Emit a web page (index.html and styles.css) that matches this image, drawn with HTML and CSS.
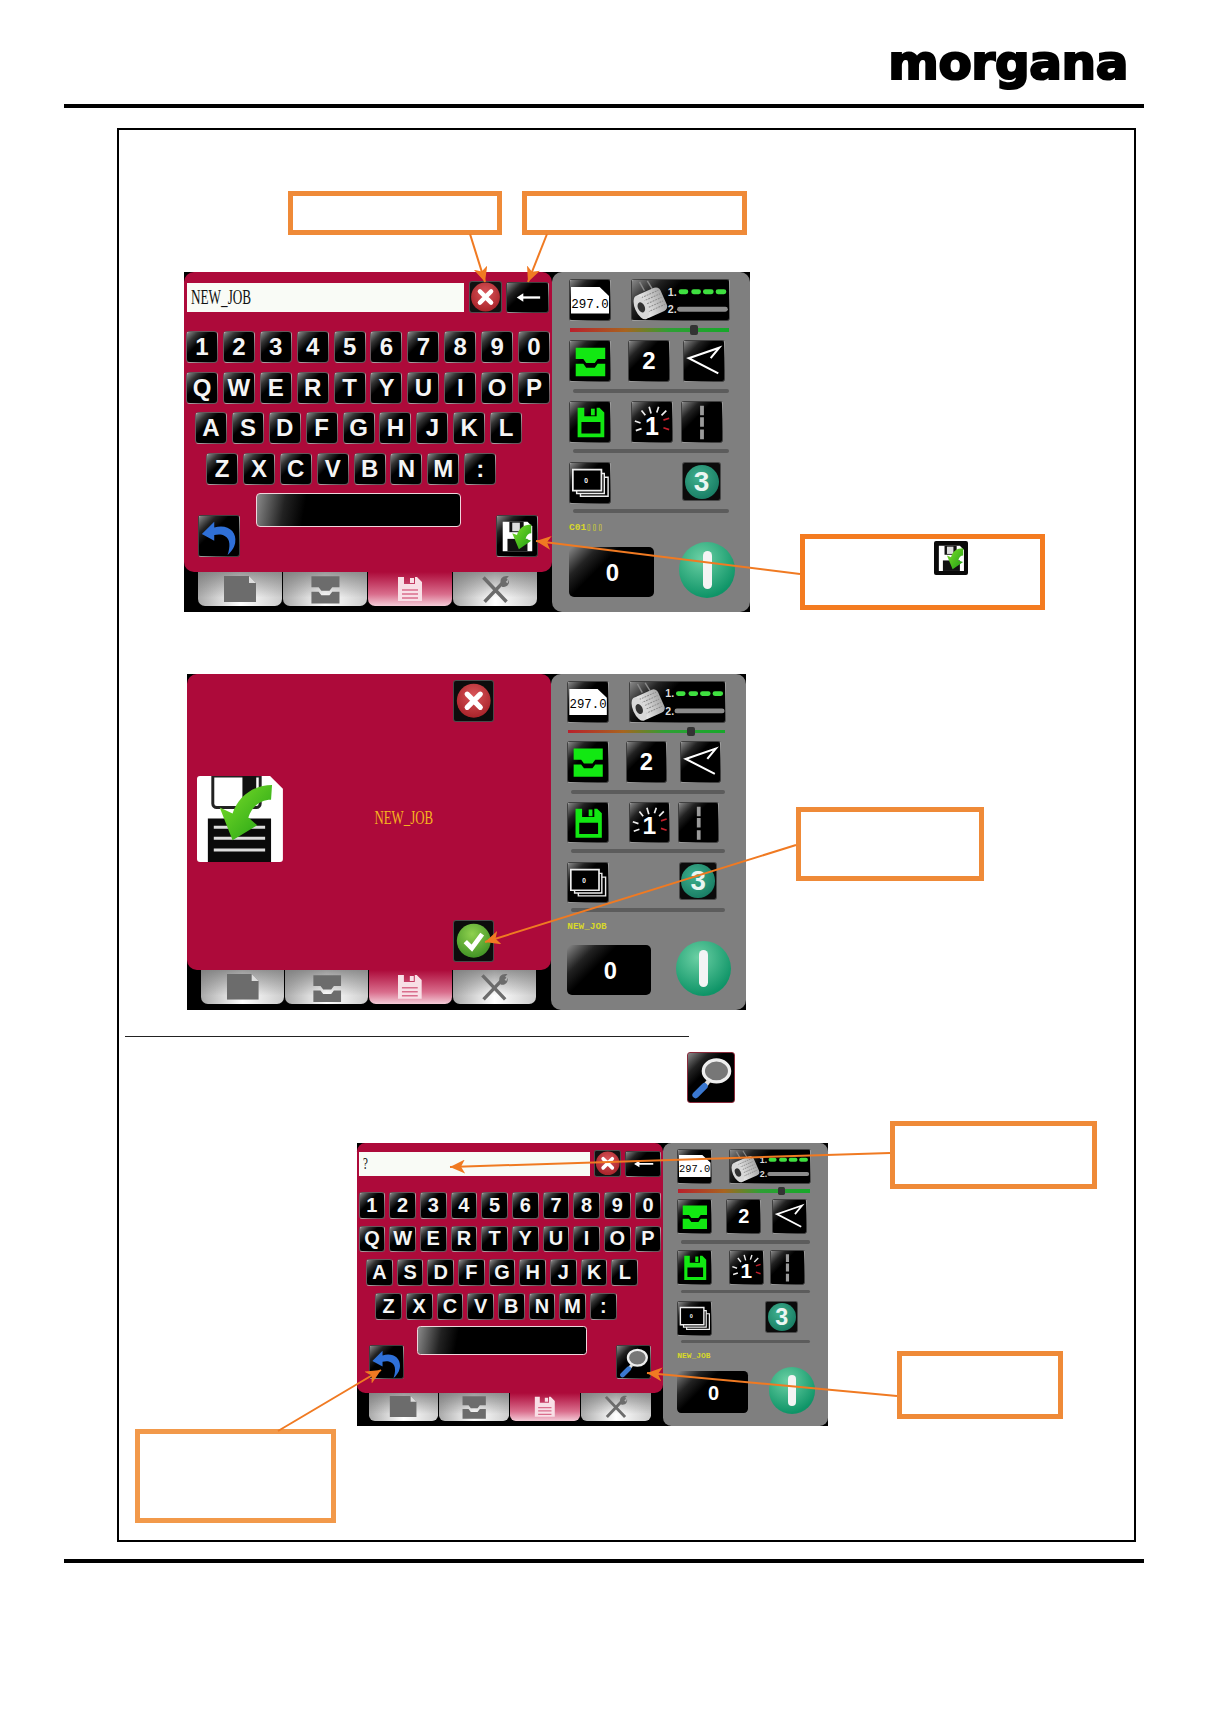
FILE: index.html
```html
<!DOCTYPE html>
<html lang="en">
<head>
  <meta charset="UTF-8" />
  <title>morgana - save job</title>
  <link rel="stylesheet" href="styles.css">
</head>
<body>
  <!-- icon sprite -->
  <svg class="sprite" xmlns="http://www.w3.org/2000/svg">
    <defs>
      <radialGradient id="redBall" cx="50%" cy="35%" r="70%"><stop offset="0" stop-color="#d9565a"/><stop offset="1" stop-color="#a51f26"/></radialGradient>
      <radialGradient id="greenBall" cx="45%" cy="30%" r="75%"><stop offset="0" stop-color="#8fd14f"/><stop offset="1" stop-color="#3d8f22"/></radialGradient>
      <linearGradient id="arrowGreen" x1="0" y1="0" x2="1" y2="1"><stop offset="0" stop-color="#7fe02a"/><stop offset="1" stop-color="#1f9f14"/></linearGradient>
      <linearGradient id="spool" x1="0" y1="0" x2="1" y2="0"><stop offset="0" stop-color="#f4f4f4"/><stop offset="1" stop-color="#a8a8a8"/></linearGradient>
      <marker id="head" markerUnits="userSpaceOnUse" markerWidth="16" markerHeight="14" refX="15" refY="7" orient="auto"><path d="M0 0L15 7L0 14L4 7z" fill="#f07a22"/></marker>
      <symbol id="i-close" viewBox="0 0 42 42"><circle cx="21" cy="21" r="18" fill="url(#redBall)"/><path d="M14 14l14 14M28 14L14 28" stroke="#fff" stroke-width="5.5" stroke-linecap="round"/></symbol>
      <symbol id="i-check" viewBox="0 0 42 42"><circle cx="21" cy="21" r="18" fill="url(#greenBall)"/><path d="M12 22l7 7 11-15" fill="none" stroke="#fff" stroke-width="5"/></symbol>
      <symbol id="i-back" viewBox="0 0 43 31"><path d="M14 15.500h21" stroke="#fff" stroke-width="2.500"/><path d="M10 15.500l7-4.500v9z" fill="#fff"/></symbol>
      <symbol id="i-undo" viewBox="0 0 42 42"><path d="M3 19L16 6v6c14-4 24 4 22 16-1 6-5 10-8 13 3-9 3-17-3-20-3-2-7-2-11-1v6z" fill="#2f70d8"/></symbol>
      <symbol id="i-savecheck" viewBox="0 0 42 42"><path d="M6 6h26l5 5v26H6z" fill="#fff"/><path d="M13 6h15v11H13z" fill="#111"/><path d="M16 7h8v9h-8z" fill="#ddd"/><path d="M11 24h21v13H11z" fill="#111"/><path d="M36 9c-8 0-13 4-15 11l-5-2 7 17 13-9-6-2c1-4 3-6 6-6z" fill="url(#arrowGreen)"/></symbol>
      <symbol id="i-bigsave" viewBox="0 0 87 87"><path d="M3 0h71l13 13v71a3 3 0 0 1-3 3H3a3 3 0 0 1-3-3V3a3 3 0 0 1 3-3z" fill="#fff"/><path d="M16 0v28a4 4 0 0 0 4 4h40a4 4 0 0 0 4-4V0z" fill="none" stroke="#222" stroke-width="3"/><path d="M46 0h14v24H46z" fill="#111"/><path d="M11 43h64v44H11z" fill="#0a0a0a"/><path d="M17 52h52M17 63h52M17 75h52" stroke="#ddd" stroke-width="3"/><path d="M76 9l-1 15c-10 0-19 6-23 18l9 8-25 15-13-33 13 6C42 20 58 9 76 9z" fill="url(#arrowGreen)"/></symbol>
      <symbol id="i-search" viewBox="0 0 42 42"><ellipse cx="26" cy="15" rx="12" ry="10" fill="#777" stroke="#eee" stroke-width="3"/><path d="M19 24l-3 4" stroke="#ddd" stroke-width="4"/><path d="M15 29L7 37" stroke="#3a78d0" stroke-width="6" stroke-linecap="round"/></symbol>
      <symbol id="i-tray" viewBox="0 0 42 42"><path d="M6 7h31v12h-8l-3 4h-9l-3-4H6z" fill="currentColor"/><path d="M6 24h8l3 4h9l3-4h8v13H6z" fill="currentColor"/></symbol>
      <symbol id="i-angle" viewBox="0 0 42 42"><path d="M36 34L5 18l32-11-9 11" fill="none" stroke="#fff" stroke-width="2.200"/></symbol>
      <symbol id="i-floppy" viewBox="0 0 42 42"><path fill-rule="evenodd" fill="currentColor" d="M8 6h23l5 5v26H8zM15 6v9h13V6zM12 21v12h20V21z"/><path d="M22 7h4v7h-4z" fill="currentColor"/></symbol>
      <symbol id="i-floppytab" viewBox="0 0 26 26"><path fill-rule="evenodd" fill="#f8dfe6" d="M1 1h19l5 5v19H1zM7 1v7h11V1z"/><path d="M13 2h4v5h-4z" fill="#f8dfe6"/><path d="M5 14h16M5 18h16M5 22h16" stroke="#d96d8c" stroke-width="1.500"/></symbol>
      <symbol id="i-rays" viewBox="0 0 42 42"><path d="M3 20l6 2M4 30l6-2M10 9l4 5M18 5l2 7M28 5l-2 6M36 9l-5 5" stroke="#eee" stroke-width="1.800"/><path d="M33 19l6-2M33 27l6 2" stroke="#c21f2b" stroke-width="1.800"/></symbol>
      <symbol id="i-dash" viewBox="0 0 42 42"><path d="M21 4v10M21 16v10M21 29v10" stroke="#9a9a9a" stroke-width="4"/></symbol>
      <symbol id="i-stack" viewBox="0 0 42 42"><path d="M11 15h29v20H11z" fill="#000" stroke="#eee" stroke-width="1.500"/><path d="M7 11h29v21H7z" fill="#000" stroke="#eee" stroke-width="1.500"/><path d="M3 7h30v22H3z" fill="#000" stroke="#eee" stroke-width="1.800"/><text x="17" y="21" class="stack-num">0</text></symbol>
      <symbol id="i-bobbin" viewBox="0 0 98 41"><path d="M7 2l5 9M15 1l5 8" stroke="#888" stroke-width="1.500"/><g transform="rotate(-24 18 24)"><rect x="6" y="11" width="27" height="26" rx="5" fill="url(#spool)"/><path d="M12 15h19M12 19h19M12 23h19M12 27h19M12 31h19" stroke="#888" stroke-dasharray="2 1"/><ellipse cx="8" cy="24" rx="6.500" ry="13" fill="#d8d8d8"/><ellipse cx="8" cy="24" rx="3.500" ry="5.500" fill="#333"/></g><text x="36" y="16" class="bob-num">1.</text><text x="36" y="34" class="bob-num">2.</text><path d="M49.500 12h5M62.500 12h5M74.500 12h6M87.500 12h6" stroke="#3fe040" stroke-width="5" stroke-linecap="round"/><path d="M48 30h47" stroke="#8c8c8c" stroke-width="5" stroke-linecap="round"/></symbol>
      <symbol id="i-doc" viewBox="0 0 34 26"><path d="M1 0h25l7 7v19H1z" fill="#6c6c6c"/><path d="M26 0l7 7h-7z" fill="#ddd"/></symbol>
      <symbol id="i-tools" viewBox="0 0 26 26"><path d="M3 3l20 21M23 4L4 24" stroke="#6c6c6c" stroke-width="3"/><path d="M18 8c-1-4 2-7 7-6l-4 4 3 2 1-3c1 4-2 7-6 6z" fill="#6c6c6c"/></symbol>
    </defs>
  </svg>

  <div class="page">
    <header class="top">
      <div class="logo">morgana</div>
    </header>

    <main class="frame">
      <!-- first screen: keyboard, save -->
      <div class="screen screen-one">
        <div class="left">
          <div class="panel">
            <div class="entry">
              <div class="field"><span class="field-text">NEW_JOB</span></div>
              <div class="btn btn-close"><svg><use href="#i-close"/></svg></div>
              <div class="btn btn-back"><svg><use href="#i-back"/></svg></div>
            </div>
            <div class="keyboard">
              <div class="keys"><b>1</b><b>2</b><b>3</b><b>4</b><b>5</b><b>6</b><b>7</b><b>8</b><b>9</b><b>0</b></div>
              <div class="keys"><b>Q</b><b>W</b><b>E</b><b>R</b><b>T</b><b>Y</b><b>U</b><b>I</b><b>O</b><b>P</b></div>
              <div class="keys keys-a"><b>A</b><b>S</b><b>D</b><b>F</b><b>G</b><b>H</b><b>J</b><b>K</b><b>L</b></div>
              <div class="keys keys-z"><b>Z</b><b>X</b><b>C</b><b>V</b><b>B</b><b>N</b><b>M</b><b>:</b></div>
            </div>
            <div class="actions">
              <div class="btn btn-action"><svg><use href="#i-undo"/></svg></div>
              <div class="spacebar"></div>
              <div class="btn btn-action"><svg><use href="#i-savecheck"/></svg></div>
            </div>
          </div>
          <div class="tabs">
            <div class="tab"><svg class="tab-doc"><use href="#i-doc"/></svg></div>
            <div class="tab"><svg class="tab-tray"><use href="#i-tray"/></svg></div>
            <div class="tab tab-active"><svg class="tab-save"><use href="#i-floppytab"/></svg></div>
            <div class="tab"><svg class="tab-tools"><use href="#i-tools"/></svg></div>
          </div>
        </div>
        <aside class="side">
          <div class="row gap-20">
            <div class="btn"><div class="file"><span>297.0</span></div></div>
            <div class="btn btn-bobbin"><svg><use href="#i-bobbin"/></svg></div>
          </div>
          <div class="slider"><span class="thumb"></span></div>
          <div class="row row-tools">
            <div class="btn btn-green"><svg><use href="#i-tray"/></svg></div>
            <div class="btn btn-num">2</div>
            <div class="btn"><svg><use href="#i-angle"/></svg></div>
          </div>
          <div class="divider"></div>
          <div class="row row-stitch">
            <div class="btn btn-green"><svg><use href="#i-floppy"/></svg></div>
            <div class="btn btn-num btn-rays"><svg><use href="#i-rays"/></svg><span>1</span></div>
            <div class="btn"><svg><use href="#i-dash"/></svg></div>
          </div>
          <div class="divider divider-b"></div>
          <div class="row row-count">
            <div class="btn"><svg><use href="#i-stack"/></svg></div>
            <div class="btn btn-three"><span>3</span></div>
          </div>
          <div class="divider divider-c"></div>
          <div class="job-label">C01&#9647;&#9647;&#9647;</div>
          <div class="row row-run">
            <div class="counter">0</div>
            <div class="power"><span></span></div>
          </div>
        </aside>
      </div>

      <!-- second screen: confirm -->
      <div class="screen screen-two">
        <div class="left">
          <div class="panel confirm">
            <div class="btn confirm-close"><svg><use href="#i-close"/></svg></div>
            <svg class="big-save"><use href="#i-bigsave"/></svg>
            <div class="confirm-name"><span>NEW_JOB</span></div>
            <div class="btn confirm-ok"><svg><use href="#i-check"/></svg></div>
          </div>
          <div class="tabs">
            <div class="tab"><svg class="tab-doc"><use href="#i-doc"/></svg></div>
            <div class="tab"><svg class="tab-tray"><use href="#i-tray"/></svg></div>
            <div class="tab tab-active"><svg class="tab-save"><use href="#i-floppytab"/></svg></div>
            <div class="tab"><svg class="tab-tools"><use href="#i-tools"/></svg></div>
          </div>
        </div>
        <aside class="side">
          <div class="row gap-20">
            <div class="btn"><div class="file"><span>297.0</span></div></div>
            <div class="btn btn-bobbin"><svg><use href="#i-bobbin"/></svg></div>
          </div>
          <div class="slider"><span class="thumb"></span></div>
          <div class="row row-tools">
            <div class="btn btn-green"><svg><use href="#i-tray"/></svg></div>
            <div class="btn btn-num">2</div>
            <div class="btn"><svg><use href="#i-angle"/></svg></div>
          </div>
          <div class="divider"></div>
          <div class="row row-stitch">
            <div class="btn btn-green"><svg><use href="#i-floppy"/></svg></div>
            <div class="btn btn-num btn-rays"><svg><use href="#i-rays"/></svg><span>1</span></div>
            <div class="btn"><svg><use href="#i-dash"/></svg></div>
          </div>
          <div class="divider divider-b"></div>
          <div class="row row-count">
            <div class="btn"><svg><use href="#i-stack"/></svg></div>
            <div class="btn btn-three"><span>3</span></div>
          </div>
          <div class="divider divider-c"></div>
          <div class="job-label">NEW_JOB</div>
          <div class="row row-run">
            <div class="counter">0</div>
            <div class="power"><span></span></div>
          </div>
        </aside>
      </div>

      <div class="thin-rule"></div>
      <div class="btn btn-search"><svg><use href="#i-search"/></svg></div>

      <!-- third screen: search -->
      <div class="screen screen-three">
        <div class="left">
          <div class="panel">
            <div class="entry">
              <div class="field"><span class="field-text">?</span></div>
              <div class="btn btn-close"><svg><use href="#i-close"/></svg></div>
              <div class="btn btn-back"><svg><use href="#i-back"/></svg></div>
            </div>
            <div class="keyboard">
              <div class="keys"><b>1</b><b>2</b><b>3</b><b>4</b><b>5</b><b>6</b><b>7</b><b>8</b><b>9</b><b>0</b></div>
              <div class="keys"><b>Q</b><b>W</b><b>E</b><b>R</b><b>T</b><b>Y</b><b>U</b><b>I</b><b>O</b><b>P</b></div>
              <div class="keys keys-a"><b>A</b><b>S</b><b>D</b><b>F</b><b>G</b><b>H</b><b>J</b><b>K</b><b>L</b></div>
              <div class="keys keys-z"><b>Z</b><b>X</b><b>C</b><b>V</b><b>B</b><b>N</b><b>M</b><b>:</b></div>
            </div>
            <div class="actions">
              <div class="btn btn-action"><svg><use href="#i-undo"/></svg></div>
              <div class="spacebar"></div>
              <div class="btn btn-action"><svg><use href="#i-search"/></svg></div>
            </div>
          </div>
          <div class="tabs">
            <div class="tab"><svg class="tab-doc"><use href="#i-doc"/></svg></div>
            <div class="tab"><svg class="tab-tray"><use href="#i-tray"/></svg></div>
            <div class="tab tab-active"><svg class="tab-save"><use href="#i-floppytab"/></svg></div>
            <div class="tab"><svg class="tab-tools"><use href="#i-tools"/></svg></div>
          </div>
        </div>
        <aside class="side">
          <div class="row gap-20">
            <div class="btn"><div class="file"><span>297.0</span></div></div>
            <div class="btn btn-bobbin"><svg><use href="#i-bobbin"/></svg></div>
          </div>
          <div class="slider"><span class="thumb"></span></div>
          <div class="row row-tools">
            <div class="btn btn-green"><svg><use href="#i-tray"/></svg></div>
            <div class="btn btn-num">2</div>
            <div class="btn"><svg><use href="#i-angle"/></svg></div>
          </div>
          <div class="divider"></div>
          <div class="row row-stitch">
            <div class="btn btn-green"><svg><use href="#i-floppy"/></svg></div>
            <div class="btn btn-num btn-rays"><svg><use href="#i-rays"/></svg><span>1</span></div>
            <div class="btn"><svg><use href="#i-dash"/></svg></div>
          </div>
          <div class="divider divider-b"></div>
          <div class="row row-count">
            <div class="btn"><svg><use href="#i-stack"/></svg></div>
            <div class="btn btn-three"><span>3</span></div>
          </div>
          <div class="divider divider-c"></div>
          <div class="job-label">NEW_JOB</div>
          <div class="row row-run">
            <div class="counter">0</div>
            <div class="power"><span></span></div>
          </div>
        </aside>
      </div>

      <!-- callouts, their text is blanked in the manual -->
      <div class="callout call-clear"></div>
      <div class="callout call-back"></div>
      <div class="callout call-save"><div class="mini-save"><svg><use href="#i-savecheck"/></svg></div></div>
      <div class="callout call-ok"></div>
      <div class="callout call-field"></div>
      <div class="callout call-find"></div>
      <div class="callout call-undo"></div>

      <svg class="arrows" viewBox="119 130 1015 1410">
        <path d="M470 234L485 282"/>
        <path d="M547 234L528 282"/>
        <path d="M800 574L536 541"/>
        <path d="M796 845L485 942"/>
        <path d="M890 1153L450 1167"/>
        <path d="M897 1396L647 1373"/>
        <path d="M278 1431L381 1370"/>
      </svg>
    </main>

    <div class="bottom-rule"></div>
  </div>
</body>
</html>
```

FILE: styles.css
```css
* {
  margin: 0;
  padding: 0;
  box-sizing: border-box;
}

body {
  background-color: #fff;
  font-family: 'Liberation Sans', Arial, sans-serif;
}

.sprite {
  position: absolute;
  width: 0;
  height: 0;
}

.page {
  width: 1080px;
  margin-left: 64px;
}

.top {
  height: 108px;
  border-bottom: 4px solid #000;
  display: flex;
  justify-content: flex-end;
  padding: 34px 16px 0 0;
}

.logo {
  font-family: 'DejaVu Sans', sans-serif;
  font-weight: 700;
  font-size: 48.5px;
  line-height: 56px;
  letter-spacing: -0.4px;
  color: #000;
  -webkit-text-stroke: 2.2px #000;
}

.frame {
  position: relative;
  width: 1019px;
  height: 1414px;
  margin: 20px 0 0 53px;
  border: 2px solid #000;
}

.bottom-rule {
  height: 4px;
  margin-top: 17px;
  background-color: #000;
}

/* touch panel screens, sized for the first one and zoomed for the others */
.screen {
  width: 566px;
  height: 340px;
  display: flex;
  background-color: #000;
}

.screen-one {
  margin: 142px 0 0 65px;
}

.screen-two {
  margin: 63px 0 0 69px;
  zoom: 0.9876;
}

.screen-three {
  margin: 48px 0 0 286px;
  zoom: 0.832;
}

.screen-three .row-count {
  width: 145px;
}

.left {
  width: 368px;
}

.panel {
  height: 300px;
  background-color: #ad0a3a;
  border-radius: 10px;
}

.entry {
  display: flex;
  align-items: center;
  gap: 5px;
  padding: 9px 0 0 3px;
}

.field {
  width: 277px;
  height: 29px;
  background-color: #f9fbf6;
  padding-left: 4px;
  line-height: 29px;
  overflow: hidden;
}

.field-text {
  display: inline-block;
  font-family: 'Liberation Serif', serif;
  font-size: 20px;
  color: #111;
  transform: scaleX(0.66);
  transform-origin: left;
}

.btn {
  width: 42px;
  height: 42px;
  flex: none;
  display: grid;
  place-items: center;
  border-radius: 3px;
  border: 1px solid rgba(255, 255, 255, 0.25);
  background: linear-gradient(135deg, #8a8a8a 0, #222 22%, #000 38%);
  color: #fff;
}

.btn > * {
  grid-area: 1 / 1;
}

.btn svg {
  width: 100%;
  height: 100%;
  display: block;
}

.btn-close {
  width: 33px;
  height: 32px;
  background: #111;
}

.btn-close svg {
  transform: scale(1.12);
}

.btn-back {
  width: 43px;
  height: 31px;
  margin-left: -1px;
}

.keyboard {
  display: flex;
  flex-direction: column;
  gap: 8.5px;
  margin-top: 18px;
}

.keys {
  display: flex;
  gap: 4.9px;
  padding-left: 2px;
}

.keys-a {
  padding-left: 11px;
}

.keys-z {
  padding-left: 22px;
}

.keys b {
  width: 32px;
  height: 32px;
  display: flex;
  align-items: center;
  justify-content: center;
  border-radius: 4px;
  border: 1px solid rgba(255, 220, 230, 0.4);
  background: linear-gradient(135deg, #8e8e8e 0, #333 20%, #000 38%);
  font-size: 24px;
  font-weight: 700;
  color: #f4f4f4;
}

.actions {
  display: flex;
  align-items: flex-start;
  margin-top: 8px;
  padding-left: 14px;
}

.btn-action {
  margin-top: 22px;
}

.spacebar {
  width: 205px;
  height: 34px;
  margin: 0 35px 0 16px;
  border-radius: 4px;
  border: 1.5px solid #f0d5dc;
  background: linear-gradient(100deg, #8a8a8a 0, #222 14%, #000 24%);
}

.tabs {
  display: flex;
  gap: 1px;
  padding-left: 14px;
}

.tab {
  width: 84px;
  height: 34px;
  display: flex;
  align-items: center;
  justify-content: center;
  border-radius: 0 0 7px 7px;
  background: linear-gradient(180deg, rgba(110, 110, 110, 0.7), rgba(110, 110, 110, 0) 75%), linear-gradient(90deg, #aaa, #fff 50%, #ccc);
  color: #6c6c6c;
}

.tab-active {
  background: linear-gradient(180deg, #ad0a3a 0, #d96d8c 65%, #f4ccd8 100%);
}

.tab-doc {
  width: 34px;
  height: 26px;
}

.tab-tray {
  width: 38px;
  height: 38px;
}

.tab-save {
  width: 26px;
  height: 26px;
}

.tab-tools {
  width: 30px;
  height: 30px;
}

/* right hand status column */
.side {
  width: 198px;
  padding: 7px 0 0 17px;
  background-color: #7f7f7f;
  border-radius: 10px;
}

.row {
  display: flex;
}

.gap-20 {
  gap: 20px;
}

.file {
  width: 38px;
  height: 27px;
  background-color: #fff;
  clip-path: polygon(0 0, 74% 0, 100% 35%, 100% 100%, 0 100%);
  display: flex;
  align-items: flex-end;
  justify-content: center;
  padding-bottom: 2px;
}

.file span {
  font-family: 'Liberation Mono', monospace;
  font-size: 12.5px;
  line-height: 14px;
  color: #000;
}

.btn-bobbin {
  width: 99px;
}

.slider {
  position: relative;
  width: 159px;
  height: 4px;
  margin: 7px 0 0 1px;
  background: linear-gradient(90deg, #b9202c 0, #a8641f 35%, #2f9f35 62%, #17a82a 100%);
}

.thumb {
  position: absolute;
  left: 120px;
  top: -3px;
  width: 8px;
  height: 10px;
  background-color: #333;
  border-radius: 2px;
}

.row-tools {
  gap: 17px;
  margin-top: 8px;
}

.row-tools .btn:last-child {
  margin-left: -4px;
}

.btn-green {
  color: #12e812;
}

.btn-num {
  font-size: 24px;
  font-weight: 700;
}

.divider {
  width: 156px;
  height: 4px;
  margin: 7px 0 0 4px;
  border-radius: 2px;
  background-color: #5c5c5c;
}

.divider-b {
  margin-top: 6px;
}

.divider-c {
  margin-top: 5px;
}

.row-stitch {
  gap: 20px;
  margin-top: 8px;
}

.row-stitch .btn:last-child {
  margin-left: -12px;
}

.btn-rays span {
  margin-top: 8px;
  font-size: 25px;
}

.row-count {
  justify-content: space-between;
  width: 152px;
  margin-top: 9px;
}

.stack-num {
  font-family: 'Liberation Sans', sans-serif;
  font-size: 7px;
  font-weight: 700;
  fill: #fff;
  text-anchor: middle;
}

.bob-num {
  font-family: 'Liberation Sans', sans-serif;
  font-size: 11px;
  font-weight: 700;
  fill: #ddd;
}

.btn-three {
  width: 39px;
  height: 39px;
  background: #0b0b0b;
}

.btn-three span {
  width: 34px;
  height: 34px;
  border-radius: 50%;
  background: radial-gradient(circle at 40% 35%, #3fb08e, #0d6e57);
  display: flex;
  align-items: center;
  justify-content: center;
  font-size: 28px;
  font-weight: 700;
  color: #eaf6f2;
}

.job-label {
  height: 12px;
  margin-top: 9px;
  font-family: 'Liberation Mono', monospace;
  font-size: 9.5px;
  font-weight: 700;
  line-height: 12px;
  color: #d8d82a;
}

.row-run {
  align-items: center;
  gap: 25px;
  margin-top: 11px;
}

.counter {
  width: 85px;
  height: 50px;
  display: flex;
  align-items: center;
  justify-content: center;
  padding: 3px 0 0 2px;
  border-radius: 5px;
  background: linear-gradient(135deg, #8a8a8a 0, #222 22%, #000 38%);
  font-size: 24px;
  font-weight: 700;
  color: #fff;
}

.power {
  width: 56px;
  height: 56px;
  margin-top: -3px;
  display: flex;
  align-items: center;
  justify-content: center;
  border-radius: 50%;
  background: radial-gradient(circle at 40% 30%, #6bd0a4, #0e9467 75%);
}

.power span {
  width: 9px;
  height: 38px;
  border-radius: 5px;
  background-color: #f4f4f4;
}

/* confirm panel */
.confirm {
  display: grid;
  grid-template-columns: 87px 1fr 42px;
  grid-template-rows: 42px 1fr 42px;
  padding: 6px 57px 9px 10px;
}

.confirm-close {
  grid-column: 3;
  grid-row: 1;
  background: #0c0c0c;
}

.big-save {
  grid-column: 1;
  grid-row: 2;
  width: 87px;
  height: 87px;
  align-self: center;
  margin-top: -4px;
}

.confirm-name {
  grid-column: 2;
  grid-row: 2;
  align-self: center;
  justify-self: end;
  margin: -6px 20px 0 0;
}

.confirm-name span {
  display: inline-block;
  font-family: 'Liberation Serif', serif;
  font-size: 20px;
  color: #f5b51f;
  transform: scaleX(0.65);
  transform-origin: right;
}

.confirm-ok {
  grid-column: 3;
  grid-row: 3;
  background: #0c0c0c;
}

.thin-rule {
  width: 564px;
  height: 1px;
  margin: 26px 0 0 6px;
  background-color: #222;
}

.btn-search {
  width: 48px;
  height: 51px;
  margin: 15px 0 0 568px;
  border-color: #8a2a3a;
}

/* annotations on top of the shots */
.callout {
  position: absolute;
  border: 5px solid #ef8a38;
}

.call-clear { left: 169px; top: 61px; width: 214px; height: 44px; }
.call-back { left: 403px; top: 61px; width: 225px; height: 44px; }
.call-save { left: 681px; top: 404px; width: 245px; height: 76px; border-color: #f47b20; padding: 2px 0 0 129px; }
.call-ok { left: 677px; top: 677px; width: 188px; height: 74px; }
.call-field { left: 771px; top: 991px; width: 207px; height: 68px; }
.call-find { left: 778px; top: 1221px; width: 166px; height: 68px; }
.call-undo { left: 16px; top: 1299px; width: 201px; height: 94px; border-color: #f2994a; }

.mini-save {
  width: 34px;
  height: 34px;
  background-color: #0a0a0a;
  border-radius: 2px;
}

.mini-save svg {
  width: 100%;
  height: 100%;
  display: block;
}

.arrows {
  position: absolute;
  left: 0;
  top: 0;
  width: 1015px;
  height: 1410px;
  pointer-events: none;
}

.arrows path {
  fill: none;
  stroke: #f07a22;
  stroke-width: 2;
  marker-end: url(#head);
}
```
